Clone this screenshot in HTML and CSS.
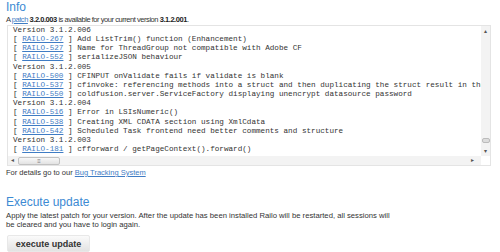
FILE: index.html
```html
<!DOCTYPE html>
<html lang="en">
<head>
    <meta charset="UTF-8">
    <title>Update</title>
    <link rel="stylesheet" href="styles.css">
</head>
<body>
    <h2>Info</h2>
    <p class="intro">A <a href="#">patch</a> <b>3.2.0.003</b> is available for your current version <b>3.1.2.001</b>.</p>

    <div class="changelog">
        <div class="log-content">
            <div>Version 3.1.2.006</div>
            <div>[ <a href="#">RAILO-267</a> ] Add ListTrim() function (Enhancement)</div>
            <div>[ <a href="#">RAILO-527</a> ] Name for ThreadGroup not compatible with Adobe CF</div>
            <div>[ <a href="#">RAILO-552</a> ] serializeJSON behaviour</div>
            <div>Version 3.1.2.005</div>
            <div>[ <a href="#">RAILO-500</a> ] CFINPUT onValidate fails if validate is blank</div>
            <div>[ <a href="#">RAILO-537</a> ] cfinvoke: referencing methods into a struct and then duplicating the struct result in the copy</div>
            <div>[ <a href="#">RAILO-550</a> ] coldfusion.server.ServiceFactory displaying unencrypt datasource password</div>
            <div>Version 3.1.2.004</div>
            <div>[ <a href="#">RAILO-516</a> ] Error in LSIsNumeric()</div>
            <div>[ <a href="#">RAILO-538</a> ] Creating XML CDATA section using XmlCdata</div>
            <div>[ <a href="#">RAILO-542</a> ] Scheduled Task frontend need better comments and structure</div>
            <div>Version 3.1.2.003</div>
            <div>[ <a href="#">RAILO-181</a> ] cfforward / getPageContext().forward()</div>
        </div>
        <div class="vbar">
            <span class="arrow">&#9652;</span>
            <span class="vthumb"></span>
            <span class="arrow">&#9662;</span>
        </div>
        <div class="hbar">
            <span class="arrow">&#9666;</span>
            <span class="hthumb">&#8801;</span>
            <span class="arrow right">&#9656;</span>
        </div>
        <div class="corner"></div>
    </div>

    <p class="details">For details go to our <a href="#">Bug Tracking System</a></p>

    <h2 class="execute">Execute update</h2>
    <p class="note">Apply the latest patch for your version. After the update has been installed Railo will be restarted, all sessions will be cleared and you have to login again.</p>
    <button type="button">execute update</button>
</body>
</html>
```

FILE: styles.css
```css
* {
    box-sizing: border-box;
    margin: 0;
    padding: 0;
}

body {
    font-family: 'Liberation Sans', Arial, sans-serif;
    font-size: 7.5px;
    color: #333;
    background: #fff;
    padding: 0 6px;
    width: 500px;
    height: 252px;
    overflow: hidden;
}

a {
    color: #3f7cc4;
}

h2 {
    font-weight: normal;
    font-size: 12px;
    line-height: 15px;
    color: #3c8ad3;
}

.intro {
    line-height: 9px;
    letter-spacing: -0.45px;
}

.intro b {
    font-weight: bold;
    color: #222;
}

.changelog {
    margin: 1px 0 0 1px;
    width: 484px;
    height: 141px;
    border: 1px solid #e4e4e4;
    display: grid;
    grid-template-columns: minmax(0, 1fr) 9px;
    grid-template-rows: minmax(0, 1fr) 9px;
}

.log-content {
    overflow: hidden;
    font-family: 'Liberation Mono', 'Courier New', monospace;
    font-size: 7.65px;
    line-height: 9.15px;
    color: #333;
    padding: 0 0 0 5px;
}

.log-content div {
    white-space: pre;
}

.vbar {
    background: #f3f3f3;
    display: flex;
    flex-direction: column;
    align-items: center;
}

.hbar {
    background: #f3f3f3;
    display: flex;
    align-items: center;
}

.corner {
    background: #fff;
}

.arrow {
    font-size: 6px;
    line-height: 9px;
    color: #555;
    width: 9px;
    text-align: center;
}

.vbar .arrow:first-child {
    margin-top: 1px;
}

.vthumb {
    margin-top: auto;
    margin-bottom: 4px;
    width: 8px;
    height: 5px;
    background: #ddd;
    border: 1px solid #bbb;
    border-radius: 2px;
}

.hthumb {
    width: 42px;
    height: 8px;
    margin-left: 1px;
    background: linear-gradient(#f8f8f8, #e2e2e2);
    border: 1px solid #c2c2c2;
    border-radius: 2px;
    font-size: 6px;
    line-height: 6px;
    color: #777;
    text-align: center;
}

.arrow.right {
    margin-left: auto;
    margin-right: 4px;
}

.details {
    margin-top: 2px;
    line-height: 9px;
}

.execute {
    margin-top: 18px;
}

.note {
    font-size: 7.7px;
    line-height: 9px;
    margin-top: 1px;
    max-width: 390px;
}

button {
    margin: 6px 0 0 1px;
    width: 83px;
    height: 17px;
    border: 1px solid #e8e8e8;
    border-radius: 2px;
    background: linear-gradient(#fafafa, #e3e3e3);
    font-family: 'Liberation Sans', Arial, sans-serif;
    font-size: 9px;
    font-weight: bold;
    color: #333;
}
```
